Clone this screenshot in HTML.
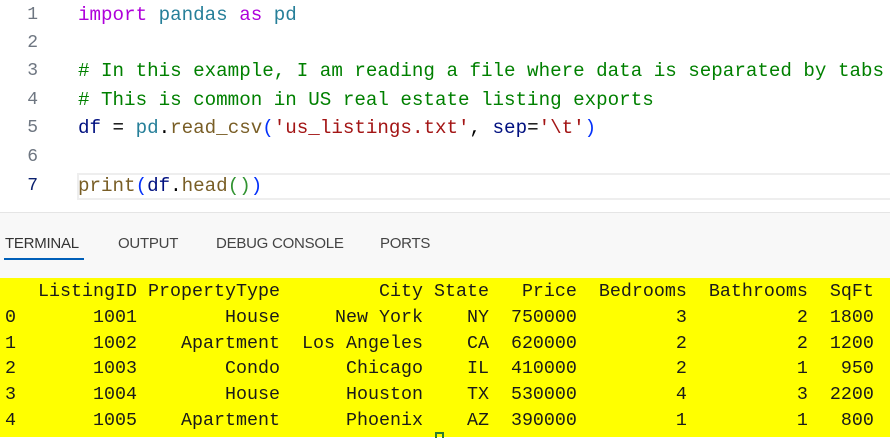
<!DOCTYPE html>
<html><head><meta charset="utf-8"><style>
*{margin:0;padding:0;box-sizing:border-box}
body{width:890px;height:437px;overflow:hidden;background:#fff;position:relative;font-family:"Liberation Mono",monospace}
.ln{position:absolute;left:0;width:38px;text-align:right;font-size:18px;color:#6e7681;line-height:28px}
.code{position:absolute;left:78px;font-size:19.2px;white-space:pre;line-height:28px;color:#000}
.k{color:#af00db}.m{color:#267f99}.c{color:#008000}.v{color:#001080}.s{color:#a31515}.f{color:#795e26}.b1{color:#0431fa}.b2{color:#319331}
.hl{position:absolute;left:77px;top:173px;width:813px;height:27px;border:2px solid #eeeeee;border-right:none}
.panel{position:absolute;left:0;top:212px;width:890px;height:66px;background:#f8f8f8;border-top:1px solid #e5e5e5}
.tab{position:absolute;top:22px;font-family:"Liberation Sans",sans-serif;font-size:15px;color:#444;letter-spacing:-0.25px}
.term{position:absolute;left:0;top:278px;width:890px;height:159px;background:#ffff00}
.tl{position:absolute;left:5px;font-size:18.33px;white-space:pre;color:#1a1a1a;line-height:26px}
</style></head><body>
<div class="ln" style="top:1px">1</div>
<div class="ln" style="top:29px">2</div>
<div class="ln" style="top:57px">3</div>
<div class="ln" style="top:86px">4</div>
<div class="ln" style="top:114px">5</div>
<div class="ln" style="top:143px">6</div>
<div class="ln" style="top:172px;color:#0b216f">7</div>
<div class="hl"></div>
<div class="code" style="top:1px"><span class="k">import</span> <span class="m">pandas</span> <span class="k">as</span> <span class="m">pd</span></div>
<div class="code c" style="top:57px"># In this example, I am reading a file where data is separated by tabs</div>
<div class="code c" style="top:86px"># This is common in US real estate listing exports</div>
<div class="code" style="top:114px"><span class="v">df</span> = <span class="m">pd</span>.<span class="f">read_csv</span><span class="b1">(</span><span class="s">'us_listings.txt'</span>, <span class="v">sep</span>=<span class="s">'\t'</span><span class="b1">)</span></div>
<div class="code" style="top:172px"><span class="f">print</span><span class="b1">(</span><span class="v">df</span>.<span class="f">head</span><span class="b2">()</span><span class="b1">)</span></div>
<div class="panel">
<div class="tab" style="left:5px;color:#333">TERMINAL</div>
<div style="position:absolute;left:4px;top:45px;width:80px;height:2px;background:#005fb8"></div>
<div class="tab" style="left:118px">OUTPUT</div>
<div class="tab" style="left:216px">DEBUG CONSOLE</div>
<div class="tab" style="left:380px">PORTS</div>
</div>
<div class="term">
<div class="tl" style="top:1px">   ListingID PropertyType         City State   Price  Bedrooms  Bathrooms  SqFt</div>
<div class="tl" style="top:27px">0       1001        House     New York    NY  750000         3          2  1800</div>
<div class="tl" style="top:53px">1       1002    Apartment  Los Angeles    CA  620000         2          2  1200</div>
<div class="tl" style="top:78px">2       1003        Condo      Chicago    IL  410000         2          1   950</div>
<div class="tl" style="top:104px">3       1004        House      Houston    TX  530000         4          3  2200</div>
<div class="tl" style="top:130px">4       1005    Apartment      Phoenix    AZ  390000         1          1   800</div>
<div style="position:absolute;left:435px;top:154px;width:9px;height:6px;border:2px solid #2e7d32;border-bottom:none"></div>
</div>
</body></html>
